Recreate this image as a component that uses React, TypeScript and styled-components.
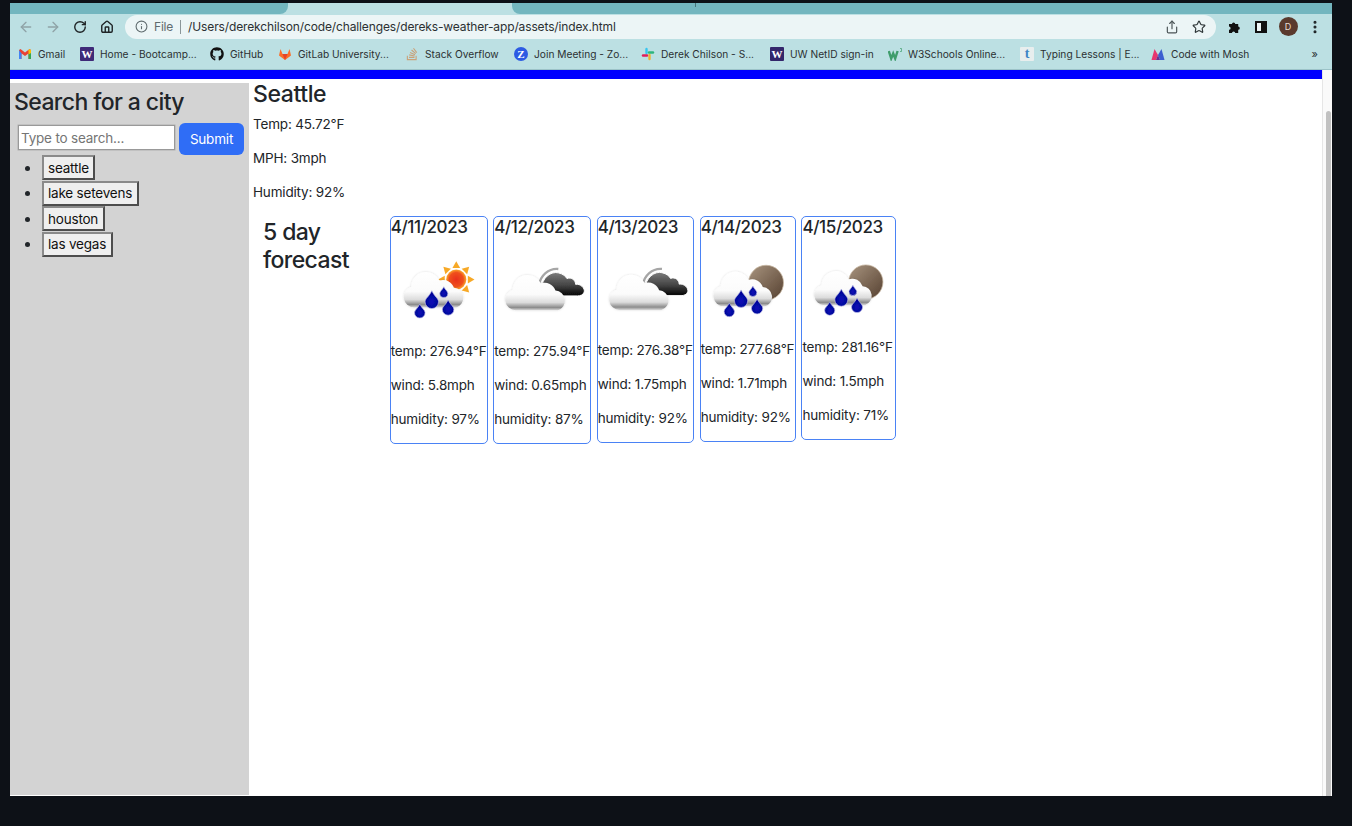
import React, { FC } from 'react';
import styled, { createGlobalStyle } from 'styled-components';
import { ArrowLeft, ArrowRight, RotateCw, Home, Info, Share, Star, MoreVertical } from 'lucide-react';
import { FaGithub, FaStackOverflow } from 'react-icons/fa';

const GlobalStyle = createGlobalStyle`
    html, body {
        margin: 0;
        height: 100%;
        overflow: hidden;
        background: #0d1117;
    }
    body {
        font-family: Inter, "Liberation Sans", sans-serif;
        color: #212529;
    }
`;

const Desktop = styled.div`
    height: 826px;
    padding: 3px 20px 30px 10px;
    box-sizing: border-box;
`;

const BrowserWindow = styled.div`
    height: 793px;
    display: flex;
    flex-direction: column;
    background: #fff;
`;

const TabStrip = styled.div`
    height: 11px;
    display: flex;
    background: #bce0e3;
`;

const Tab = styled.div<{ $w?: number }>`
    background: #73b6bf;
    ${p => (p.$w ? `width: ${p.$w}px;` : 'flex: 1;')}
    border-radius: ${p => (p.$w ? '0 0 8px 0' : '0 0 0 8px')};
`;

const ActiveTab = styled.div`
    width: 224px;
    background: #bce0e3;
`;

const TabTick = styled.div`
    width: 1px;
    height: 4px;
    margin-left: 183px;
    background: #45747a;
`;

const Toolbar = styled.div`
    height: 26px;
    display: flex;
    align-items: center;
    padding: 0 3.5px 1px 2px;
    background: #bce0e3;
    box-sizing: border-box;
`;

const ToolButton = styled.div<{ $dim?: boolean }>`
    width: 27px;
    height: 24px;
    flex: none;
    display: flex;
    align-items: center;
    justify-content: center;
    color: ${p => (p.$dim ? '#8fa3a7' : '#1f2426')};
`;

const Omnibox = styled.div`
    flex: 1;
    height: 24px;
    margin: 0 5px 0 5px;
    display: flex;
    align-items: center;
    padding: 0 3px 0 10px;
    border-radius: 12px;
    background: #ecf5f6;
    font-size: 12px;
    color: #2b3032;
`;

const FileLabel = styled.span`
    margin-left: 6px;
    color: #5f6b6e;
    letter-spacing: -0.2px;
`;

const Divider = styled.span`
    width: 1px;
    height: 14px;
    margin: 0 7px 0 7px;
    background: #8a9699;
`;

const Url = styled.span`
    flex: 1;
    letter-spacing: -0.13px;
`;

const Avatar = styled.div`
    width: 19px;
    height: 19px;
    border-radius: 50%;
    background: #5a3a2e;
    color: #e8dcd6;
    font-size: 9px;
    display: flex;
    align-items: center;
    justify-content: center;
`;

const PanelIcon = styled.div`
    width: 12px;
    height: 12px;
    box-sizing: border-box;
    border: 2px solid #111;
    border-right-width: 6px;
    background: #ecf5f6;
`;

const BookmarkBar = styled.div`
    height: 30px;
    display: flex;
    align-items: center;
    padding: 0 0 2px 8px;
    background: #bce0e3;
    border-bottom: 1px solid #9cc3c8;
    box-sizing: border-box;
    font-size: 10.2px;
    color: #2b3032;
`;

const Bookmark = styled.div<{ $w: number }>`
    width: ${p => p.$w}px;
    flex: none;
    display: flex;
    align-items: center;
    gap: 6px;
    white-space: nowrap;
`;

const Favicon = styled.span<{ $bg: string; $fg?: string; $round?: boolean; $size?: number }>`
    width: 14px;
    height: 14px;
    flex: none;
    display: flex;
    align-items: center;
    justify-content: center;
    background: ${p => p.$bg};
    color: ${p => p.$fg || '#fff'};
    border-radius: ${p => (p.$round ? '50%' : '1px')};
    font: bold ${p => p.$size || 11}px "Liberation Serif", serif;
`;

const MoreBookmarks = styled.span`
    flex: 1;
    text-align: right;
    padding-right: 14px;
    font-size: 11px;
`;

const Viewport = styled.div`
    flex: 1;
    display: flex;
    min-height: 0;
`;

const Page = styled.div`
    flex: 1;
    display: flex;
    flex-direction: column;
    min-width: 0;
`;

const BlueBar = styled.div`
    height: 9px;
    background: #0000ff;
    flex: none;
`;

const Columns = styled.div`
    flex: 1;
    display: flex;
`;

const Sidebar = styled.aside`
    width: 239px;
    flex: none;
    margin: 4px 0 1px;
    padding: 5px 0 0 0;
    background: #d3d3d3;
`;

const SideTitle = styled.h2`
    margin: 0 0 6px 4px;
    font-size: 23px;
    line-height: 29px;
    font-weight: 500;
    letter-spacing: -0.6px;
`;

const SearchForm = styled.form`
    display: flex;
    align-items: flex-start;
    gap: 4px;
    padding-left: 8px;
`;

const SearchInput = styled.input`
    width: 157px;
    height: 25px;
    margin-top: 2px;
    box-sizing: border-box;
    padding: 0 2px;
    border: 1px solid #999;
    box-shadow: 0 0 0 0.5px #b0b0b0;
    background: #fff;
    font: 13.5px Inter, sans-serif;
    letter-spacing: -0.2px;
    &::placeholder {
        color: #757575;
        opacity: 1;
    }
`;

const SubmitButton = styled.button`
    width: 65px;
    height: 32px;
    border: 0;
    border-radius: 6px;
    background: #2f6df6;
    color: #fff;
    font: 13.5px Inter, sans-serif;
    letter-spacing: -0.2px;
`;

const CityList = styled.ul`
    margin: 0;
    padding: 0 0 0 32px;
`;

const CityItem = styled.li`
    height: 25.6px;
`;

const CityButton = styled.button`
    height: 25px;
    padding: 0 4.5px 0 4px;
    box-sizing: border-box;
    border-style: solid;
    border-width: 2px;
    border-color: #8a8a8a #4d4d4d #4d4d4d #8a8a8a;
    background: #efefef;
    color: #111;
    font: 13.5px Inter, sans-serif;
    letter-spacing: -0.2px;
`;

const Main = styled.main`
    flex: 1;
    padding-left: 4px;
`;

const CityTitle = styled.h2`
    margin: 0 0 5px;
    font-size: 23px;
    line-height: 30px;
    font-weight: 500;
    letter-spacing: -0.4px;
`;

const Stat = styled.p`
    margin: 0 0 13px;
    font-size: 13.5px;
    line-height: 21px;
    white-space: nowrap;
    letter-spacing: -0.18px;
`;

const Forecast = styled.section`
    display: flex;
    align-items: flex-start;
`;

const ForecastLabel = styled.h3`
    width: 126.7px;
    margin: 2px 0 0;
    padding-left: 10px;
    flex: none;
    font-size: 23px;
    line-height: 28px;
    font-weight: 500;
    letter-spacing: -0.6px;
`;

const Cards = styled.div`
    display: flex;
    align-items: flex-start;
    gap: 5.5px;
`;

const Card = styled.article<{ $w: number }>`
    width: ${p => p.$w}px;
    box-sizing: border-box;
    border: 1px solid #4a82f5;
    border-radius: 5px;
`;

const CardDate = styled.h5`
    margin: 0 0 6px;
    font-size: 17px;
    line-height: 21.6px;
    font-weight: 500;
    white-space: nowrap;
    letter-spacing: -0.4px;
`;

const IconSvg = styled.svg`
    display: block;
    width: 100%;
    height: auto;
`;

const Defs = styled.svg`
    display: block;
    width: 0;
    height: 0;
`;

const Scrollbar = styled.div`
    width: 10px;
    flex: none;
    padding: 41px 1px 0 3px;
    box-sizing: border-box;
    display: flex;
    background: #fafafa;
    border-left: 1px solid #e6e6e6;
`;

const ScrollThumb = styled.div`
    flex: 1;
    background: #c1c1c1;
    border-radius: 4px 4px 0 0;
`;

type Sky = 'rainSun' | 'clouds' | 'rainMoon';

const CLOUD = 'M24 65a11 11 0 0 1-3-21.5a15.5 15.5 0 0 1 29.5-6.5a12 12 0 0 1 15 7.5a10.5 10.5 0 0 1 2.5 20.5z';

const SharedDefs: FC = () => (
    <Defs aria-hidden="true">
        <defs>
            <linearGradient id="cloudFill" x1="0" y1="0" x2="0" y2="1">
                <stop offset="0" stopColor="#ffffff" />
                <stop offset="0.55" stopColor="#fbfbfb" />
                <stop offset="0.78" stopColor="#dcdcdc" />
                <stop offset="0.92" stopColor="#8c8c8c" />
                <stop offset="1" stopColor="#d8d8d8" />
            </linearGradient>
            <linearGradient id="darkFill" x1="0" y1="0" x2="0" y2="1">
                <stop offset="0" stopColor="#7c7c7c" />
                <stop offset="0.55" stopColor="#444444" />
                <stop offset="1" stopColor="#030303" />
            </linearGradient>
            <linearGradient id="moonFill" x1="0" y1="0" x2="1" y2="1">
                <stop offset="0" stopColor="#a8947f" />
                <stop offset="1" stopColor="#554030" />
            </linearGradient>
            <radialGradient id="sunFill">
                <stop offset="0" stopColor="#e8301c" />
                <stop offset="0.7" stopColor="#f0501f" />
                <stop offset="1" stopColor="#fba82c" />
            </radialGradient>
            <radialGradient id="dropFill" cy="0.62" r="0.6">
                <stop offset="0" stopColor="#0a10b8" />
                <stop offset="1" stopColor="#00008c" />
            </radialGradient>
            <filter id="soft" x="-10%" y="-10%" width="120%" height="120%">
                <feGaussianBlur stdDeviation="0.45" />
            </filter>
            <filter id="cloudEdge" x="-10%" y="-10%" width="120%" height="120%">
                <feDropShadow dx="0" dy="0" stdDeviation="1" floodColor="#000" floodOpacity="0.15" />
            </filter>
        </defs>
    </Defs>
);

const Drop: FC<{ x: number; y: number; r: number }> = ({ x, y, r }) => (
    <path
        d={`M${x} ${y - r * 1.55}C${x + r * 0.4} ${y - r * 0.7} ${x + r} ${y - r * 0.4} ${x + r} ${y + r * 0.1}A${r} ${r} 0 0 1 ${x - r} ${y + r * 0.1}C${x - r} ${y - r * 0.4} ${x - r * 0.4} ${y - r * 0.7} ${x} ${y - r * 1.55}z`}
        fill="url(#dropFill)"
        stroke="#b9bce8"
        strokeWidth="0.7"
    />
);

const SUN_RAYS = [0, 45, 90, 135, 180, 225, 270, 315];

const WeatherIcon: FC<{ sky: Sky }> = ({ sky }) => (
    <IconSvg viewBox="0 0 100 100" role="img" aria-label={sky}>
        <g filter="url(#soft)">
            {sky === 'rainSun' && (
                <g>
                    {SUN_RAYS.map(a => (
                        <polygon key={a} points="64,24 72,24 68,17" fill="#f7a928" transform={`rotate(${a} 68 36)`} />
                    ))}
                    <circle cx="68" cy="36" r="10.5" fill="url(#sunFill)" />
                </g>
            )}
            {sky === 'rainMoon' && <circle cx="69" cy="40" r="18.5" fill="url(#moonFill)" stroke="#c9b8a4" strokeWidth="0.8" />}
            {sky === 'clouds' && (
                <g>
                    <path d="M47 42C48 32 57 24 67 25" fill="none" stroke="#a6a6a6" strokeWidth="2.4" />
                    <path
                        d="M50 46C49 34 60 27 67 29C72 30 75 33 76 35C81 33 85 37 85 41C90 40 95 45 94 49C93 52 90 53 87 53L52 53z"
                        fill="url(#darkFill)"
                        stroke="#ffffff"
                        strokeWidth="1"
                    />
                </g>
            )}
            {sky === 'clouds' ? (
                <path d={CLOUD} fill="url(#cloudFill)" filter="url(#cloudEdge)" transform="translate(-1.5 3)" />
            ) : (
                <path d={CLOUD} fill="url(#cloudFill)" filter="url(#cloudEdge)" />
            )}
            {sky !== 'clouds' && (
                <g>
                    <Drop x={30} y={70} r={5.5} />
                    <Drop x={42.5} y={58.5} r={7} />
                    <Drop x={59.5} y={66.5} r={6} />
                    <Drop x={55} y={50} r={4.2} />
                </g>
            )}
        </g>
    </IconSvg>
);

const PuzzleIcon: FC = () => (
    <svg width="14" height="14" viewBox="0 0 14 14">
        <path d="M2 4h3a1.6 1.6 0 0 1 3.200 0h3v2.600a1.600 1.600 0 0 1 0 3.200V13H8.200a1.600 1.600 0 0 0-3.200 0H2V9.800a1.600 1.600 0 0 0 0-3.200z" fill="#111" />
    </svg>
);

const GmailIcon: FC = () => (
    <svg width="14" height="14" viewBox="0 0 14 14">
        <path d="M1 3v9h2.500V6.500L7 9l3.500-2.500V12H13V3l-1.500-1L7 5.500 2.500 2z" fill="#ea4335" />
        <path d="M1 3v9h2.500V6.500z" fill="#4285f4" />
        <path d="M13 3v9h-2.500V6.500z" fill="#34a853" />
        <path d="M11.500 2L13 3v3l-2.500 1.500V3.300z" fill="#fbbc04" />
    </svg>
);

const GitlabIcon: FC = () => (
    <svg width="14" height="14" viewBox="0 0 14 14">
        <path d="M7 13L1 8.500 2.500 2l2 5h5l2-5L13 8.500z" fill="#fc6d26" />
        <path d="M7 13L4.500 7h5z" fill="#e24329" />
    </svg>
);

const SlackIcon: FC = () => (
    <svg width="14" height="14" viewBox="0 0 14 14" strokeWidth="2.400" strokeLinecap="round">
        <path d="M5.500 2v4" stroke="#36c5f0" />
        <path d="M2 8.500h4" stroke="#e01e5a" />
        <path d="M8.500 8v4" stroke="#ecb22e" />
        <path d="M8 5.500h4" stroke="#2eb67d" />
    </svg>
);

const W3Icon: FC = () => (
    <svg width="14" height="14" viewBox="0 0 14 14">
        <path d="M0.800 4l2.400 7.500 2-5 2 5 2.400-7.500" fill="none" stroke="#3f9d6c" strokeWidth="2.400" />
        <path d="M12 1.500h1.500v3H12" fill="none" stroke="#3f9d6c" strokeWidth="0.700" />
    </svg>
);

const MoshIcon: FC = () => (
    <svg width="14" height="14" viewBox="0 0 14 14">
        <path d="M0.500 13L3.500 2 7 8l-2 5z" fill="#e8366f" />
        <path d="M13.500 13L10.500 2 7 8l2 5z" fill="#3c5fd0" />
        <path d="M5 13l2-5 2 5z" fill="#6b2f8f" />
    </svg>
);

const BOOKMARKS: { label: string; width: number; icon: React.ReactNode }[] = [
    { label: 'Gmail', width: 62, icon: <GmailIcon /> },
    { label: 'Home - Bootcamp...', width: 130, icon: <Favicon $bg="#3f2a78">W</Favicon> },
    { label: 'GitHub', width: 68, icon: <FaGithub size={14} color="#111" /> },
    { label: 'GitLab University...', width: 127, icon: <GitlabIcon /> },
    { label: 'Stack Overflow', width: 109, icon: <FaStackOverflow size={14} color="#c9a27a" /> },
    {
        label: 'Join Meeting - Zo...',
        width: 127,
        icon: <Favicon $bg="#2d5be3" $round>Z</Favicon>,
    },
    { label: 'Derek Chilson - S...', width: 129, icon: <SlackIcon /> },
    { label: 'UW NetID sign-in', width: 118, icon: <Favicon $bg="#33266b">W</Favicon> },
    { label: 'W3Schools Online...', width: 132, icon: <W3Icon /> },
    { label: 'Typing Lessons | E...', width: 131, icon: <Favicon $bg="#e8eeee" $fg="#3f86c6" $size={14}>t</Favicon> },
    { label: 'Code with Mosh', width: 120, icon: <MoshIcon /> },
];

const CITIES = ['seattle', 'lake setevens', 'houston', 'las vegas'];

const FORECAST: { date: string; sky: Sky; temp: string; wind: string; humidity: string; width: number }[] = [
    { date: '4/11/2023', sky: 'rainSun', temp: '276.94', wind: '5.8', humidity: '97', width: 98 },
    { date: '4/12/2023', sky: 'clouds', temp: '275.94', wind: '0.65', humidity: '87', width: 98 },
    { date: '4/13/2023', sky: 'clouds', temp: '276.38', wind: '1.75', humidity: '92', width: 97.5 },
    { date: '4/14/2023', sky: 'rainMoon', temp: '277.68', wind: '1.71', humidity: '92', width: 96.3 },
    { date: '4/15/2023', sky: 'rainMoon', temp: '281.16', wind: '1.5', humidity: '71', width: 94.5 },
];

const App: FC = () => {
    return (
        <Desktop>
            <GlobalStyle />
            <SharedDefs />
            <BrowserWindow>
                <TabStrip>
                    <Tab $w={278} />
                    <ActiveTab />
                    <Tab><TabTick /></Tab>
                </TabStrip>
                <Toolbar>
                    <ToolButton $dim><ArrowLeft size={16} /></ToolButton>
                    <ToolButton $dim><ArrowRight size={16} /></ToolButton>
                    <ToolButton><RotateCw size={14} strokeWidth={2.4} /></ToolButton>
                    <ToolButton><Home size={14} strokeWidth={2.4} /></ToolButton>
                    <Omnibox>
                        <Info size={13} color="#5f6b6e" />
                        <FileLabel>File</FileLabel>
                        <Divider />
                        <Url>/Users/derekchilson/code/challenges/dereks-weather-app/assets/index.html</Url>
                        <ToolButton><Share size={14} color="#4a5356" /></ToolButton>
                        <ToolButton><Star size={14} color="#30383a" /></ToolButton>
                    </Omnibox>
                    <ToolButton><PuzzleIcon /></ToolButton>
                    <ToolButton><PanelIcon /></ToolButton>
                    <ToolButton><Avatar>D</Avatar></ToolButton>
                    <ToolButton><MoreVertical size={16} strokeWidth={2.6} /></ToolButton>
                </Toolbar>
                <BookmarkBar>
                    {BOOKMARKS.map(bookmark => (
                        <Bookmark key={bookmark.label} $w={bookmark.width}>
                            {bookmark.icon}
                            {bookmark.label}
                        </Bookmark>
                    ))}
                    <MoreBookmarks>»</MoreBookmarks>
                </BookmarkBar>
                <Viewport>
                    <Page>
                        <BlueBar />
                        <Columns>
                            <Sidebar>
                                <SideTitle>Search for a city</SideTitle>
                                <SearchForm>
                                    <SearchInput type="text" placeholder="Type to search..." />
                                    <SubmitButton type="button">Submit</SubmitButton>
                                </SearchForm>
                                <CityList>
                                    {CITIES.map(city => (
                                        <CityItem key={city}>
                                            <CityButton type="button">{city}</CityButton>
                                        </CityItem>
                                    ))}
                                </CityList>
                            </Sidebar>
                            <Main>
                                <CityTitle>Seattle</CityTitle>
                                <Stat>Temp: 45.72°F</Stat>
                                <Stat>MPH: 3mph</Stat>
                                <Stat>Humidity: 92%</Stat>
                                <Forecast>
                                    <ForecastLabel>5 day forecast</ForecastLabel>
                                    <Cards>
                                        {FORECAST.map(day => (
                                            <Card key={day.date} $w={day.width}>
                                                <CardDate>{day.date}</CardDate>
                                                <WeatherIcon sky={day.sky} />
                                                <Stat>temp: {day.temp}°F</Stat>
                                                <Stat>wind: {day.wind}mph</Stat>
                                                <Stat>humidity: {day.humidity}%</Stat>
                                            </Card>
                                        ))}
                                    </Cards>
                                </Forecast>
                            </Main>
                        </Columns>
                    </Page>
                    <Scrollbar>
                        <ScrollThumb />
                    </Scrollbar>
                </Viewport>
            </BrowserWindow>
        </Desktop>
    );
};

export default App;
